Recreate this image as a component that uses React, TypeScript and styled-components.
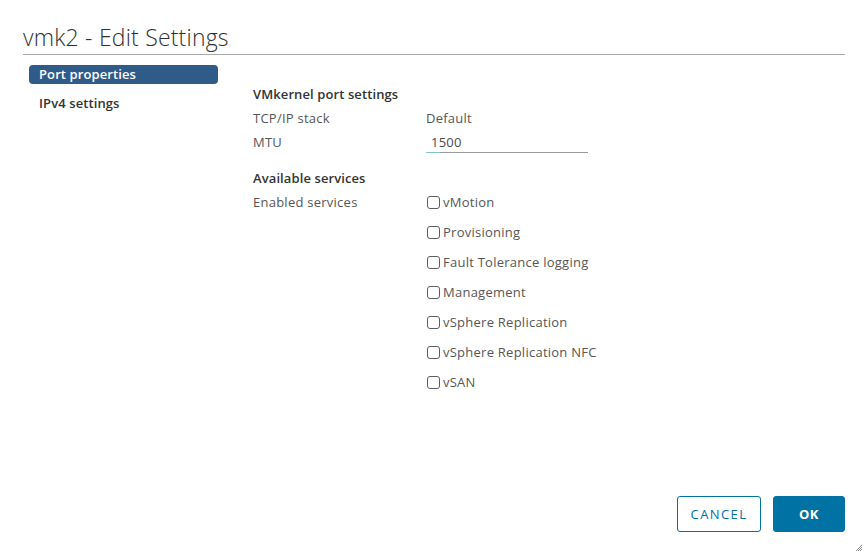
import styled, { createGlobalStyle } from "styled-components";

const GlobalStyle = createGlobalStyle`
  html, body {
    margin: 0;
    padding: 0;
    background: #ffffff;
  }
  body {
    font-family: "Open Sans", Lato, "Liberation Sans", sans-serif;
    color: #565656;
  }
`;

const Dialog = styled.div`
  position: relative;
  width: 867px;
  height: 556px;
  box-sizing: border-box;
  display: flex;
  flex-direction: column;
  background: #fff;
`;

const Header = styled.header`
  margin: 0 22px 0 23px;
  padding-top: 22px;
  height: 32px;
  border-bottom: 1px solid #a8a8a8;
`;

const Title = styled.h1`
  margin: 0;
  font-size: 23px;
  line-height: 30px;
  font-weight: 300;
  letter-spacing: 0.2px;
  color: #313131;
`;

const Body = styled.div`
  display: flex;
  flex: 1;
  min-height: 0;
`;

const Nav = styled.nav`
  width: 189px;
  margin-left: 29px;
  padding-top: 10px;
  display: flex;
  flex-direction: column;
  gap: 10px;
`;

const NavItem = styled.div<{ $active?: boolean }>`
  height: 19px;
  line-height: 19px;
  padding-left: 10px;
  border-radius: 4px;
  font-size: 13px;
  font-weight: 600;
  letter-spacing: 0.1px;
  background: ${(p) => (p.$active ? "#2f5b88" : "transparent")};
  color: ${(p) => (p.$active ? "#ffffff" : "#333333")};
`;

const Content = styled.section`
  margin-left: 35px;
  padding-top: 27px;
  display: flex;
  flex-direction: column;
`;

const SectionHead = styled.div<{ $gap?: number }>`
  height: 24px;
  line-height: 24px;
  margin-top: ${(p) => p.$gap ?? 0}px;
  font-size: 13px;
  font-weight: 600;
  letter-spacing: 0.1px;
  color: #333;
`;

const Row = styled.div`
  display: grid;
  grid-template-columns: 173px 1fr;
  font-size: 13px;
  line-height: 24px;
  letter-spacing: 0.25px;
`;

const Label = styled.div`
  height: 24px;
  color: #565656;
`;

const Value = styled.div`
  color: #565656;
`;

const MtuField = styled.div`
  width: 162px;
  height: 23px;
  box-sizing: border-box;
  padding-left: 5px;
  border-bottom: 1px solid #9a9a9a;
  position: relative;
  color: #4a4a4a;
  &::after {
    content: "";
    position: absolute;
    left: 0;
    bottom: -1px;
    width: 14px;
    height: 1px;
    background: #7fc4c9;
  }
`;

const Services = styled.div`
  display: flex;
  flex-direction: column;
  gap: 6px;
`;

const Service = styled.label`
  display: flex;
  align-items: center;
  height: 24px;
  padding-left: 1px;
  gap: 3px;
  color: #565656;
`;

const Box = styled.span`
  width: 11px;
  height: 11px;
  border: 1px solid #5e5e5e;
  border-radius: 3px;
  background: #fff;
`;

const Footer = styled.footer`
  display: flex;
  justify-content: flex-end;
  gap: 12px;
  padding: 0 22px 24px 0;
`;

const Button = styled.button<{ $primary?: boolean }>`
  height: 36px;
  box-sizing: border-box;
  padding: 0;
  width: ${(p) => (p.$primary ? 72 : 84)}px;
  border-radius: 3px;
  border: 1px solid #0072a3;
  font-family: inherit;
  font-size: 13px;
  letter-spacing: ${(p) => (p.$primary ? "0.5px" : "1.4px")};
  font-weight: ${(p) => (p.$primary ? 700 : 400)};
  background: ${(p) => (p.$primary ? "#0072a3" : "#ffffff")};
  color: ${(p) => (p.$primary ? "#ffffff" : "#0072a3")};
`;

const Grip = styled.svg`
  position: absolute;
  right: 4px;
  bottom: 4px;
`;

const services = [
  "vMotion",
  "Provisioning",
  "Fault Tolerance logging",
  "Management",
  "vSphere Replication",
  "vSphere Replication NFC",
  "vSAN",
];

export default function App() {
  return (
    <>
      <GlobalStyle />
      <Dialog>
        <Header>
          <Title>vmk2 - Edit Settings</Title>
        </Header>
        <Body>
          <Nav>
            <NavItem $active>Port properties</NavItem>
            <NavItem>IPv4 settings</NavItem>
          </Nav>
          <Content>
            <SectionHead>VMkernel port settings</SectionHead>
            <Row>
              <Label>TCP/IP stack</Label>
              <Value>Default</Value>
            </Row>
            <Row>
              <Label>MTU</Label>
              <MtuField>1500</MtuField>
            </Row>
            <SectionHead $gap={12}>Available services</SectionHead>
            <Row>
              <Label>Enabled services</Label>
              <Services>
                {services.map((s) => (
                  <Service key={s}>
                    <Box />
                    {s}
                  </Service>
                ))}
              </Services>
            </Row>
          </Content>
        </Body>
        <Footer>
          <Button>CANCEL</Button>
          <Button $primary>OK</Button>
        </Footer>
        <Grip width="8" height="8" viewBox="0 0 8 8">
          <path d="M7 1 L1 7 M7 3 L3 7 M7 5 L5 7" stroke="#777" strokeWidth="0.8" />
        </Grip>
      </Dialog>
    </>
  );
}
